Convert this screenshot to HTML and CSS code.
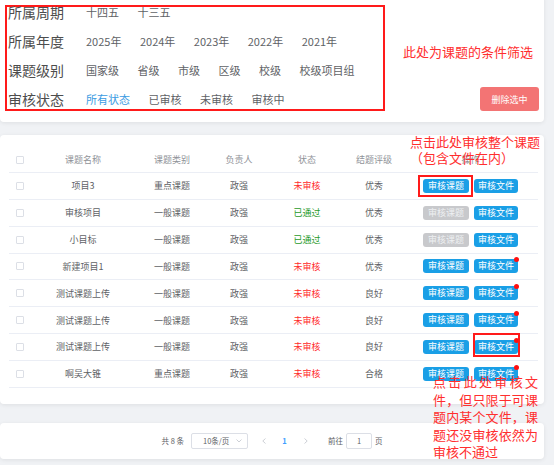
FILE: index.html
```html
<!DOCTYPE html>
<html lang="zh-CN">
<head>
    <meta charset="UTF-8">
    <title>课题审核</title>
    <link rel="stylesheet" href="styles.css">
</head>
<body>
    <div class="page">
        <!-- 条件筛选 -->
        <div class="card filter-card">
            <div class="filter-box">
                <div class="filter-row">
                    <div class="filter-label">所属周期</div>
                    <div class="filter-options">
                        <span class="filter-option">十四五</span>
                        <span class="filter-option">十三五</span>
                    </div>
                </div>
                <div class="filter-row">
                    <div class="filter-label">所属年度</div>
                    <div class="filter-options">
                        <span class="filter-option">2025年</span>
                        <span class="filter-option">2024年</span>
                        <span class="filter-option">2023年</span>
                        <span class="filter-option">2022年</span>
                        <span class="filter-option">2021年</span>
                    </div>
                </div>
                <div class="filter-row">
                    <div class="filter-label">课题级别</div>
                    <div class="filter-options">
                        <span class="filter-option">国家级</span>
                        <span class="filter-option">省级</span>
                        <span class="filter-option">市级</span>
                        <span class="filter-option">区级</span>
                        <span class="filter-option">校级</span>
                        <span class="filter-option">校级项目组</span>
                    </div>
                </div>
                <div class="filter-row">
                    <div class="filter-label">审核状态</div>
                    <div class="filter-options">
                        <span class="filter-option active">所有状态</span>
                        <span class="filter-option">已审核</span>
                        <span class="filter-option">未审核</span>
                        <span class="filter-option">审核中</span>
                    </div>
                </div>
            </div>
            <button class="btn-danger">删除选中</button>
        </div>

        <!-- 课题列表 -->
        <div class="card table-card">
            <div class="table-row table-head">
                <div><div class="check"></div></div>
                <div>课题名称</div>
                <div>课题类别</div>
                <div>负责人</div>
                <div>状态</div>
                <div>结题评级</div>
                <div>操作</div>
            </div>
            <div class="table-row">
                <div><div class="check"></div></div>
                <div>项目3</div>
                <div>重点课题</div>
                <div>政强</div>
                <div class="status-fail">未审核</div>
                <div>优秀</div>
                <div class="ops"><button class="btn-audit">审核课题</button><button class="btn-file">审核文件</button></div>
            </div>
            <div class="table-row">
                <div><div class="check"></div></div>
                <div>审核项目</div>
                <div>一般课题</div>
                <div>政强</div>
                <div class="status-pass">已通过</div>
                <div>优秀</div>
                <div class="ops"><button class="btn-audit disabled">审核课题</button><button class="btn-file">审核文件</button></div>
            </div>
            <div class="table-row">
                <div><div class="check"></div></div>
                <div>小目标</div>
                <div>一般课题</div>
                <div>政强</div>
                <div class="status-pass">已通过</div>
                <div>优秀</div>
                <div class="ops"><button class="btn-audit disabled">审核课题</button><button class="btn-file">审核文件</button></div>
            </div>
            <div class="table-row">
                <div><div class="check"></div></div>
                <div>新建项目1</div>
                <div>一般课题</div>
                <div>政强</div>
                <div class="status-fail">未审核</div>
                <div>优秀</div>
                <div class="ops"><button class="btn-audit">审核课题</button><button class="btn-file">审核文件<span class="dot"></span></button></div>
            </div>
            <div class="table-row">
                <div><div class="check"></div></div>
                <div>测试课题上传</div>
                <div>一般课题</div>
                <div>政强</div>
                <div class="status-fail">未审核</div>
                <div>良好</div>
                <div class="ops"><button class="btn-audit">审核课题</button><button class="btn-file">审核文件<span class="dot"></span></button></div>
            </div>
            <div class="table-row">
                <div><div class="check"></div></div>
                <div>测试课题上传</div>
                <div>一般课题</div>
                <div>政强</div>
                <div class="status-fail">未审核</div>
                <div>良好</div>
                <div class="ops"><button class="btn-audit">审核课题</button><button class="btn-file">审核文件<span class="dot"></span></button></div>
            </div>
            <div class="table-row">
                <div><div class="check"></div></div>
                <div>测试课题上传</div>
                <div>一般课题</div>
                <div>政强</div>
                <div class="status-fail">未审核</div>
                <div>良好</div>
                <div class="ops"><button class="btn-audit">审核课题</button><button class="btn-file">审核文件<span class="dot"></span></button></div>
            </div>
            <div class="table-row">
                <div><div class="check"></div></div>
                <div>啊吴大锥</div>
                <div>重点课题</div>
                <div>政强</div>
                <div class="status-fail">未审核</div>
                <div>合格</div>
                <div class="ops"><button class="btn-audit">审核课题</button><button class="btn-file">审核文件<span class="dot"></span></button></div>
            </div>
        </div>

        <!-- 分页 -->
        <div class="card pager-card">
            <span class="pager-total">共 8 条</span>
            <div class="pager-size">
                <span>10条/页</span>
                <svg width="6" height="4" viewBox="0 0 6 4"><polyline points="0.5,0.5 3,3 5.5,0.5" fill="none" stroke="#c0c4cc" stroke-width="0.8"/></svg>
            </div>
            <span class="pager-btn">
                <svg width="4" height="6" viewBox="0 0 4 6"><polyline points="3.5,0.5 0.8,3 3.5,5.5" fill="none" stroke="#c0c4cc" stroke-width="0.8"/></svg>
            </span>
            <span class="pager-btn current">1</span>
            <span class="pager-btn">
                <svg width="4" height="6" viewBox="0 0 4 6"><polyline points="0.5,0.5 3.2,3 0.5,5.5" fill="none" stroke="#c0c4cc" stroke-width="0.8"/></svg>
            </span>
            <span class="pager-jump">前往</span>
            <div class="pager-input">1</div>
            <span>页</span>
        </div>

        <!-- 说明标注 -->
        <div class="note note-filter">此处为课题的条件筛选</div>
        <div class="note note-topic">点击此处审核整个课题<br>（包含文件在内）</div>
        <div class="mark mark-topic"></div>
        <div class="mark mark-file"></div>
        <div class="note note-file">点击此处审核文件，但只限于可课题内某个文件，课题还没审核依然为审核不通过</div>
    </div>
</body>
</html>
```

FILE: styles.css
```css
* {
    margin: 0;
    padding: 0;
    box-sizing: border-box;
}

body {
    width: 554px;
    height: 465px;
    overflow: hidden;
    background: #f0f2f5;
    font-family: "Noto Sans CJK SC", "Noto Sans", sans-serif;
    color: #606266;
}

.page {
    position: relative;
    display: flow-root;
    width: 544px;
}

.card {
    background: #fff;
    border-radius: 4px;
    box-shadow: 0 1px 4px rgba(0, 0, 0, 0.08);
}

/* filter */
.filter-card {
    margin-top: -6px;
    padding: 11px 5px;
    display: flex;
    align-items: flex-end;
    justify-content: space-between;
}

.filter-box {
    width: 380px;
    border: 2px solid #ff1a1a;
    padding: 0 0 4px 1px;
    display: flex;
    flex-direction: column;
    gap: 18px;
}

.filter-row {
    display: flex;
    align-items: center;
    height: 11px;
}

.filter-label {
    width: 78px;
    font-size: 14px;
    line-height: 11px;
    color: #4d4d4d;
    white-space: nowrap;
}

.filter-options {
    display: flex;
    gap: 18.5px;
}

.filter-option {
    font-size: 11px;
    line-height: 11px;
    color: #606266;
    white-space: nowrap;
}

.filter-option.active {
    color: #3a9be2;
}

.btn-danger {
    width: 59px;
    height: 24px;
    border: none;
    border-radius: 3px;
    background: #f37474;
    color: #fff;
    font-family: inherit;
    font-size: 9px;
}

/* table */
.table-card {
    margin-top: 13px;
    padding: 12px 6px 16px 9px;
}

.table-row {
    display: grid;
    grid-template-columns: 22px 104px 74px 60px 76px 58px 135px;
    align-items: center;
    height: 26.85px;
    border-bottom: 1px solid #ebeef5;
    text-align: center;
    font-size: 9px;
    color: #606266;
    white-space: nowrap;
}

.table-head {
    height: 26px;
    color: #909399;
}

.check {
    width: 8px;
    height: 8px;
    margin: 0 auto;
    border: 1px solid #dcdfe6;
    border-radius: 1px;
    background: #fff;
}

.status-fail {
    color: #ff2b2b;
}

.status-pass {
    color: #1f9a2a;
}

.ops {
    display: flex;
    justify-content: center;
    gap: 5px;
}

.btn-audit,
.btn-file {
    position: relative;
    height: 14px;
    border: none;
    border-radius: 3px;
    background: #1a9fe6;
    color: #fff;
    font-family: inherit;
    font-size: 9px;
    line-height: 14px;
}

.btn-audit {
    width: 46px;
}

.btn-file {
    width: 44px;
}

.btn-audit.disabled {
    background: #c8c9cc;
    color: #eef0f2;
}

.dot {
    position: absolute;
    top: -2px;
    right: -1px;
    width: 5px;
    height: 5px;
    border-radius: 50%;
    background: #ff1010;
}

/* pagination */
.pager-card {
    margin-top: 19px;
    height: 36px;
    display: flex;
    align-items: center;
    justify-content: center;
    font-size: 7.5px;
    color: #606266;
    white-space: nowrap;
}

.pager-total {
    margin-right: 7px;
}

.pager-size {
    width: 57px;
    height: 16px;
    padding: 0 5px 0 11px;
    display: flex;
    align-items: center;
    justify-content: space-between;
    border: 1px solid #dcdfe6;
    border-radius: 2px;
}

.pager-btn {
    width: 21px;
    display: flex;
    justify-content: center;
    align-items: center;
}

.pager-btn:first-of-type {
    margin-left: 5px;
}

.pager-size + .pager-btn {
    margin-left: 5px;
}

.pager-btn.current {
    color: #409eff;
    font-weight: 600;
}

.pager-jump {
    margin-left: 12px;
}

.pager-input {
    width: 26px;
    height: 16px;
    margin: 0 3px;
    border: 1px solid #dcdfe6;
    border-radius: 2px;
    text-align: center;
    line-height: 14px;
}

/* annotations */
.note {
    position: absolute;
    color: #ff2e2e;
    font-size: 13px;
    line-height: 16px;
    white-space: nowrap;
}

.note-filter {
    left: 403px;
    top: 44px;
}

.note-topic {
    left: 410px;
    top: 134px;
}

.note-file {
    left: 433px;
    top: 373px;
    width: 105px;
    line-height: 17.5px;
    white-space: normal;
    text-align: justify;
}

.mark {
    position: absolute;
    border: 2px solid #ff1a1a;
}

.mark-topic {
    left: 418px;
    top: 175px;
    width: 55px;
    height: 22px;
}

.mark-file {
    left: 473px;
    top: 333px;
    width: 47px;
    height: 24px;
}
```
